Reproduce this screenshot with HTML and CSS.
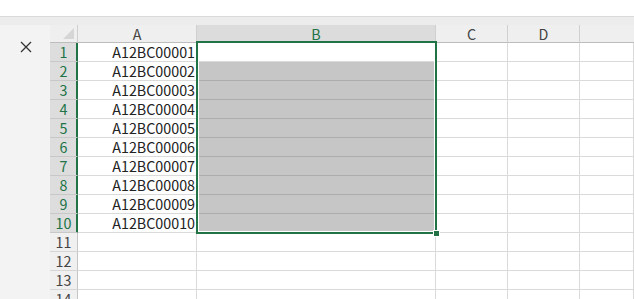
FILE: index.html
```html
<!DOCTYPE html>
<html lang="ja">
<head>
<meta charset="utf-8">
<link rel="stylesheet" href="styles.css">
</head>
<body>
<div class="topbar"></div>
<div class="strip"></div>
<div class="main">
  <div class="side">
    <svg class="close" width="12" height="12" viewBox="0 0 12 12"><path d="M1 1 L11 11 M11 1 L1 11" stroke="#333" stroke-width="1.3" fill="none"/></svg>
  </div>
  <div class="sheet">
    <div class="grid">
      <div class="corner"><span class="tri"></span></div>
      <div class="ch">A</div>
      <div class="ch ch-sel">B</div>
      <div class="ch">C</div>
      <div class="ch">D</div>
      <div class="ch ch-last"></div>

      <div class="rh rh-sel">1</div><div class="c a">A12BC00001</div><div class="c"></div><div class="c"></div><div class="c"></div><div class="c"></div>
      <div class="rh rh-sel">2</div><div class="c a">A12BC00002</div><div class="c s"></div><div class="c"></div><div class="c"></div><div class="c"></div>
      <div class="rh rh-sel">3</div><div class="c a">A12BC00003</div><div class="c s"></div><div class="c"></div><div class="c"></div><div class="c"></div>
      <div class="rh rh-sel">4</div><div class="c a">A12BC00004</div><div class="c s"></div><div class="c"></div><div class="c"></div><div class="c"></div>
      <div class="rh rh-sel">5</div><div class="c a">A12BC00005</div><div class="c s"></div><div class="c"></div><div class="c"></div><div class="c"></div>
      <div class="rh rh-sel">6</div><div class="c a">A12BC00006</div><div class="c s"></div><div class="c"></div><div class="c"></div><div class="c"></div>
      <div class="rh rh-sel">7</div><div class="c a">A12BC00007</div><div class="c s"></div><div class="c"></div><div class="c"></div><div class="c"></div>
      <div class="rh rh-sel">8</div><div class="c a">A12BC00008</div><div class="c s"></div><div class="c"></div><div class="c"></div><div class="c"></div>
      <div class="rh rh-sel">9</div><div class="c a">A12BC00009</div><div class="c s"></div><div class="c"></div><div class="c"></div><div class="c"></div>
      <div class="rh rh-sel">10</div><div class="c a">A12BC00010</div><div class="c s"></div><div class="c"></div><div class="c"></div><div class="c"></div>
      <div class="rh">11</div><div class="c"></div><div class="c"></div><div class="c"></div><div class="c"></div><div class="c"></div>
      <div class="rh">12</div><div class="c"></div><div class="c"></div><div class="c"></div><div class="c"></div><div class="c"></div>
      <div class="rh">13</div><div class="c"></div><div class="c"></div><div class="c"></div><div class="c"></div><div class="c"></div>
      <div class="rh">14</div><div class="c"></div><div class="c"></div><div class="c"></div><div class="c"></div><div class="c"></div>
    </div>
    <div class="selection"><span class="handle"></span></div>
  </div>
</div>
</body>
</html>
```

FILE: styles.css
```css
html, body {
  margin: 0;
  padding: 0;
  background: #ffffff;
  overflow: hidden;
}
body {
  width: 634px;
  height: 299px;
  font-family: "Noto Sans CJK JP", "Noto Sans", sans-serif;
  font-size: 14.3px;
  color: #333;
}
.topbar {
  height: 16px;
  background: #ffffff;
  border-bottom: 1px solid #d9d9d9;
}
.strip {
  height: 8px;
  background: #ececec;
}
.main {
  display: flex;
  height: 274px;
  overflow: hidden;
}
.side {
  width: 50px;
  flex: none;
  background: #f3f3f3;
  position: relative;
}
.close {
  display: block;
  margin: 16px 0 0 20px;
}
.sheet {
  flex: 1;
  position: relative;
  overflow: hidden;
}
.grid {
  display: grid;
  grid-template-columns: 28px 119px 239px 72px 72px 1fr;
  grid-template-rows: 18px repeat(14, 19px);
}
.grid > div {
  box-sizing: border-box;
  border-right: 1px solid #dadada;
  border-bottom: 1px solid #dadada;
  line-height: 18px;
  white-space: nowrap;
}
.corner {
  background: #efefef;
  position: relative;
  border-right-color: #cfcfcf !important;
  border-bottom-color: #bdbdbd !important;
}
.tri {
  position: absolute;
  right: 3px;
  bottom: 3px;
  width: 0;
  height: 0;
  border-left: 11px solid transparent;
  border-bottom: 11px solid #d6d6d6;
}
.ch {
  background: #efefef;
  text-align: center;
  color: #444;
  line-height: 18px !important;
  border-right-color: #d0d0d0 !important;
  border-bottom-color: #bdbdbd !important;
}
.ch-sel {
  background: #dcdcdc;
  color: #217346;
}
.ch-last {
  border-right: none !important;
}
.rh {
  background: #f0f0f0;
  text-align: center;
  color: #444;
  border-right-color: #c6c6c6 !important;
  border-bottom-color: #d6d6d6 !important;
}
.rh-sel {
  background: #dddddd;
  color: #217346;
  border-right: 1px solid #217346 !important;
  box-shadow: inset -1px 0 0 #217346;
  border-bottom-color: #c8c8c8 !important;
}
.c {
  background: #ffffff;
}
.c.a {
  text-align: right;
  padding-right: 1px;
  color: #222;
}
.c.s {
  background: #c6c6c6;
  border-bottom-color: #adadad !important;
  border-right-color: #c6c6c6 !important;
}
.selection {
  position: absolute;
  left: 146px;
  top: 16px;
  width: 241px;
  height: 193px;
  box-sizing: border-box;
  border: 2px solid #217346;
  box-shadow: inset 0 0 0 1px #ffffff;
  pointer-events: none;
}
.handle {
  position: absolute;
  right: -5px;
  bottom: -5px;
  width: 5px;
  height: 5px;
  background: #217346;
  border: 1px solid #ffffff;
}
```
